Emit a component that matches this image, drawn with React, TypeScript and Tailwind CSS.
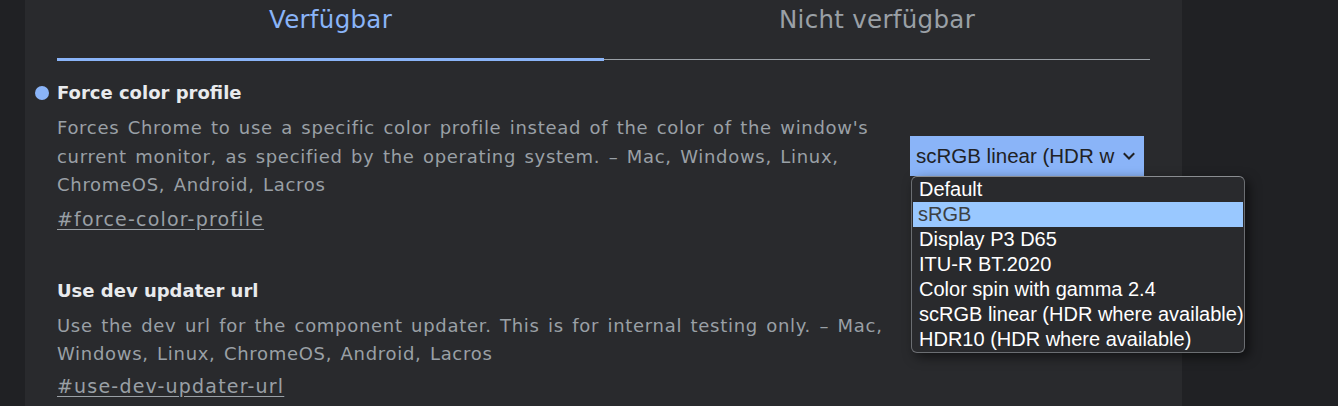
import React from "react";

const font = { fontFamily: '"DejaVu Sans", "Open Sans", sans-serif' };
const arial = { fontFamily: '"Liberation Sans", Arial, sans-serif' };

function ChevronDown() {
  return (
    <svg width="14" height="14" viewBox="0 0 14 14" fill="none" className="ml-[8px]">
      <path d="M2.5 5 L7 9.5 L11.5 5" stroke="#202124" strokeWidth="2" strokeLinecap="square" />
    </svg>
  );
}

const options = [
  "Default",
  "sRGB",
  "Display P3 D65",
  "ITU-R BT.2020",
  "Color spin with gamma 2.4",
  "scRGB linear (HDR where available)",
  "HDR10 (HDR where available)",
];

export default function App() {
  return (
    <div className="w-[1338px] h-[406px] overflow-hidden bg-[#202124] flex" style={font}>
      <div className="w-[25px] shrink-0" />
      <div className="w-[1157px] shrink-0 bg-[#292a2d] px-8 h-full">
        {/* Tabs */}
        <div className="flex h-[61px]">
          <div className="w-[547px] flex flex-col">
            <div className="flex-1 flex justify-center pt-[2px] text-[24.5px] tracking-[0.3px] leading-[36px] text-[#8ab4f8]">
              Verfügbar
            </div>
            <div className="h-[3px] bg-[#8ab4f8]" />
          </div>
          <div className="flex-1 flex flex-col">
            <div className="flex-1 flex justify-center pt-[2px] text-[24.5px] tracking-[0.3px] leading-[36px] text-[#9aa0a6]">
              Nicht verfügbar
            </div>
            <div className="h-[1px] bg-[#9aa0a6] mb-[1px]" />
          </div>
        </div>

        {/* Item 1 */}
        <div className="flex pt-[19px]">
          <div className="w-[840px]">
            <div className="relative text-[18px] leading-[26px] font-semibold text-[#e8eaed]">
              <span className="absolute left-[-22px] top-[6px] w-[14px] h-[14px] rounded-full bg-[#8ab4f8]" />
              Force color profile
            </div>
            <p className="text-[18px] tracking-[0.7px] [word-spacing:2px] leading-[28.5px] text-[#9aa0a6] mt-[8px]">
              Forces Chrome to use a specific color profile instead of the color of the window's current monitor, as specified by the operating system. – Mac, Windows, Linux, ChromeOS, Android, Lacros
            </p>
            <a className="block mt-[6px] text-[19px] tracking-[1.2px] leading-[26px] text-[#9aa0a6] underline underline-offset-[3px]">
              #force-color-profile
            </a>
          </div>
          <div className="ml-[13px] pt-[56px] relative">
            <div
              className="w-[234px] h-[40px] bg-[#8ab4f8] flex items-center pl-[6px] text-[20.5px] text-[#202124] whitespace-nowrap"
              style={arial}
            >
              scRGB linear (HDR w
              <ChevronDown />
            </div>
            <div
              className="absolute left-[1px] top-[96px] w-[334px] bg-[#292a2d] border border-[#6b6e72] border-t-[#8a8d91] rounded-[6px] shadow-[4px_4px_12px_rgba(0,0,0,0.55)] z-10"
              style={arial}
            >
              {options.map((o) => (
                <div
                  key={o}
                  className={
                    o === "sRGB"
                      ? "h-[25px] mx-[1px] bg-[#99c8ff] text-[#3c4043] text-[20px] leading-[25px] pl-[5px] whitespace-nowrap"
                      : "h-[25px] mx-[1px] text-[#ffffff] text-[20px] leading-[25px] pl-[6px] whitespace-nowrap"
                  }
                >
                  {o}
                </div>
              ))}
            </div>
          </div>
        </div>

        {/* Item 2 */}
        <div className="pt-[46px] w-[840px]">
          <div className="text-[18px] leading-[26px] font-semibold text-[#e8eaed]">Use dev updater url</div>
          <p className="text-[18px] tracking-[0.7px] [word-spacing:2px] leading-[28.5px] text-[#9aa0a6] mt-[8px]">
            Use the dev url for the component updater. This is for internal testing only. – Mac, Windows, Linux, ChromeOS, Android, Lacros
          </p>
          <a className="block mt-[4px] text-[19px] tracking-[1.2px] leading-[26px] text-[#9aa0a6] underline underline-offset-[3px]">
            #use-dev-updater-url
          </a>
        </div>
      </div>
    </div>
  );
}
